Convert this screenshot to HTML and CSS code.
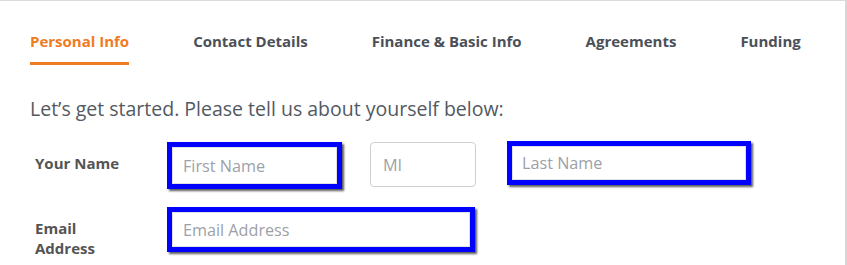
FILE: index.html
```html
<!DOCTYPE html>
<html lang="en">
<head>
<meta charset="utf-8">
<title>Personal Info</title>
<link rel="stylesheet" href="styles.css">
</head>
<body>
<div class="page">
  <nav class="tabs">
    <a class="tab active">Personal Info</a>
    <a class="tab">Contact Details</a>
    <a class="tab">Finance &amp; Basic Info</a>
    <a class="tab">Agreements</a>
    <a class="tab">Funding</a>
  </nav>
  <h2 class="intro">Let’s get started. Please tell us about yourself below:</h2>
  <div class="form-row row-name">
    <div class="label">Your Name</div>
    <div class="fields">
      <div class="field hl first"><span class="ph">First Name</span></div>
      <div class="field mi"><span class="ph">MI</span></div>
      <div class="field hl last"><span class="ph">Last Name</span></div>
    </div>
  </div>
  <div class="form-row row-email">
    <div class="label">Email<br>Address</div>
    <div class="fields">
      <div class="field hl email"><span class="ph">Email Address</span></div>
    </div>
  </div>
</div>
</body>
</html>
```

FILE: styles.css
```css
html, body {
  margin: 0;
  padding: 0;
  background: #ffffff;
}

.page {
  box-sizing: border-box;
  width: 847px;
  height: 265px;
  border-top: 1px solid #dcdcdc;
  border-right: 2px solid #d6d6d6;
  font-family: "Open Sans", "DejaVu Sans", sans-serif;
  overflow: hidden;
}

.tabs {
  display: flex;
  gap: 64px;
  padding: 30px 0 0 30px;
}

.tab {
  font-size: 15px;
  font-weight: 700;
  line-height: 20px;
  color: #4b5058;
  padding-bottom: 11px;
  border-bottom: 3px solid transparent;
  text-decoration: none;
}

.tab.active {
  color: #ef7b23;
  border-bottom-color: #ef7b23;
}

.intro {
  margin: 31px 0 0 30px;
  font-size: 19.5px;
  font-weight: 400;
  line-height: 26px;
  color: #525962;
}

.form-row {
  display: flex;
  align-items: flex-start;
  padding-left: 35px;
}

.row-name {
  margin-top: 20px;
  height: 47px;
}

.row-email {
  margin-top: 18px;
}

.label {
  width: 132px;
  padding-top: 11px;
  font-size: 15px;
  font-weight: 700;
  line-height: 20px;
  color: #545454;
}

.fields {
  display: flex;
  align-items: flex-start;
}

.field {
  box-sizing: border-box;
  display: flex;
  align-items: center;
  background: #ffffff;
  font-size: 16.2px;
  color: #9ca1a8;
}

.field.hl {
  border: 5px solid #0000ff;
  box-shadow: 2px 2px 2px rgba(0, 0, 0, 0.65), inset 0 0 0 1px #e2e2e2;
  padding-left: 11px;
}

.field.first {
  width: 175px;
  height: 47px;
}

.field.mi {
  width: 106px;
  height: 45px;
  margin-left: 28px;
  border: 1px solid #cfcfcf;
  border-radius: 4px;
  padding-left: 12px;
}

.field.last {
  width: 244px;
  height: 44px;
  margin-left: 31px;
  margin-top: -1px;
  padding-left: 10px;
}

.field.email {
  width: 308px;
  height: 45px;
}
```
